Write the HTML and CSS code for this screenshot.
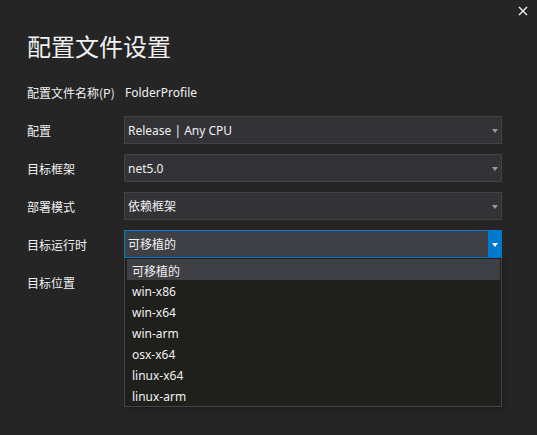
FILE: index.html
```html
<!DOCTYPE html>
<html lang="zh-CN">
<head>
	<meta charset="UTF-8">
	<title>配置文件设置</title>
	<link rel="stylesheet" href="styles.css">
</head>
<body>
	<div class="dialog">
		<button class="close" aria-label="关闭">
			<svg width="10" height="10" viewBox="0 0 10 10">
				<path d="M1 1L9 9M9 1L1 9" stroke="#f1f1f1" stroke-width="1.4" fill="none"/>
			</svg>
		</button>

		<h1>配置文件设置</h1>

		<div class="form">
			<div class="row">
				<span class="label">配置文件名称(P)</span>
				<span class="value">FolderProfile</span>
			</div>
			<div class="row">
				<span class="label">配置</span>
				<div class="select">
					<span class="text">Release | Any CPU</span>
					<span class="arrow"></span>
				</div>
			</div>
			<div class="row">
				<span class="label">目标框架</span>
				<div class="select">
					<span class="text">net5.0</span>
					<span class="arrow"></span>
				</div>
			</div>
			<div class="row">
				<span class="label">部署模式</span>
				<div class="select">
					<span class="text">依赖框架</span>
					<span class="arrow"></span>
				</div>
			</div>
			<div class="row">
				<span class="label">目标运行时</span>
				<div class="select open">
					<span class="text">可移植的</span>
					<span class="arrow"></span>
					<ul class="options">
						<li class="selected">可移植的</li>
						<li>win-x86</li>
						<li>win-x64</li>
						<li>win-arm</li>
						<li>osx-x64</li>
						<li>linux-x64</li>
						<li>linux-arm</li>
					</ul>
				</div>
			</div>
			<div class="row">
				<span class="label">目标位置</span>
			</div>
		</div>
	</div>
</body>
</html>
```

FILE: styles.css
```css
html,body {
	margin:0;
	padding:0;
	background:#252526;
	overflow:hidden;
}

body {
	font-family:"Segoe UI","Noto Sans","Noto Sans CJK SC",sans-serif;
	font-size:12px;
	color:#f1f1f1;
}

.dialog {
	position:relative;
	width:537px;
	height:435px;
	padding:30px 35px 0 27px;
	box-sizing:border-box;
}

.close {
	position:absolute;
	top:5px;
	right:8px;
	width:12px;
	height:12px;
	padding:1px;
	border:0;
	background:none;
	display:flex;
}

h1 {
	margin:0 0 16px;
	font-family:"Noto Sans CJK SC",sans-serif;
	font-weight:normal;
	font-size:24px;
	line-height:32px;
	color:#f1f1f1;
}

.form {
	display:flex;
	flex-direction:column;
	gap:10px;
}

.row {
	display:flex;
	align-items:center;
	height:28px;
}

.label {
	width:97px;
	flex:none;
	font-family:"Noto Sans CJK SC",sans-serif;
}

.value {
	padding-left:1px;
}

.select {
	position:relative;
	flex:1;
	height:28px;
	box-sizing:border-box;
	display:flex;
	align-items:center;
	padding-left:3px;
	background:#333337;
	border:1px solid #434346;
}

.select .text {
	flex:1;
}

.arrow {
	width:14px;
	align-self:stretch;
	display:flex;
	align-items:center;
	justify-content:center;
	margin-right:-1px;
}

.arrow::before {
	content:"";
	border-left:3.5px solid transparent;
	border-right:3.5px solid transparent;
	border-top:4px solid #999999;
	margin-top:1px;
}

.select.open {
	background:#3f3f46;
	border-color:#007acc;
}

.select.open .arrow {
	background:#007acc;
	margin:-1px -1px -1px 0;
}

.select.open .arrow::before {
	border-top-color:#ffffff;
}

.options {
	position:absolute;
	top:calc(100% + 1px);
	left:-1px;
	right:-1px;
	margin:0;
	padding:1px 1px 0 2px;
	list-style:none;
	background:#1f1f1c;
	border:1px solid #434346;
	border-top:0;
	box-shadow:2px 2px 4px rgba(0,0,0,.25);
}

.options li {
	height:21px;
	line-height:23px;
	padding-left:5px;
	overflow:hidden;
}

.options li.selected {
	background:#3f3f46;
	font-family:"Noto Sans CJK SC",sans-serif;
}
```
